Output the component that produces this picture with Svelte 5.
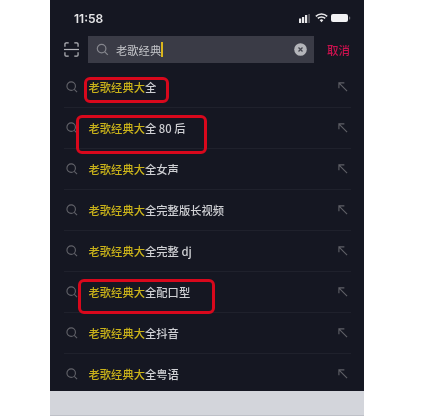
<script>
  const rows = [
    { rest: '全' },
    { rest: '全 80 后' },
    { rest: '全女声' },
    { rest: '全完整版长视频' },
    { rest: '全完整 dj' },
    { rest: '全配口型' },
    { rest: '全抖音' },
    { rest: '全粤语' }
  ];
  const marks = [
    { cls: 'm1' },
    { cls: 'm2' },
    { cls: 'm3' }
  ];
</script>

<div class="page">
  <div class="phone">
    <div class="status">
      <span class="time">11:58</span>
      <div class="status-icons">
        <svg class="signal" width="12" height="9" viewBox="0 0 12 9">
          <rect x="0" y="4.500" width="2.200" height="4.500" fill="#e8e8ea"/>
          <rect x="3" y="3" width="2.200" height="6" fill="#e8e8ea"/>
          <rect x="6" y="1" width="2.200" height="8" fill="#e8e8ea"/>
          <rect x="9.200" y="0" width="1.800" height="9" fill="#55565e"/>
        </svg>
        <svg width="13" height="10" viewBox="0 0 13 10">
          <path d="M.8 3.400a8.200 8.200 0 0 1 11.400 0M2.800 5.400a5.300 5.300 0 0 1 7.400 0" fill="none" stroke="#e8e8ea" stroke-width="1.500"/>
          <path d="M4.700 7.200a2.600 2.600 0 0 1 3.600 0L6.500 9.200z" fill="#e8e8ea"/>
        </svg>
        <svg class="battery" width="20" height="10" viewBox="0 0 20 10">
          <rect x="0" y="1" width="17" height="8" rx="2" fill="#f2f2f4"/>
          <rect x="18" y="3.500" width="1.200" height="3" rx=".6" fill="#6a6b72"/>
        </svg>
      </div>
    </div>

    <div class="searchbar">
      <svg class="scan" width="15" height="15" viewBox="0 0 16 16" fill="none" stroke="#b5b6bb" stroke-width="1.300">
        <path d="M1 5V2.200Q1 1 2.200 1H5M11 1h2.800Q15 1 15 2.200V5M1 11v2.800Q1 15 2.200 15H5M11 15h2.800Q15 15 15 13.800V11"/>
        <path d="M0 8h16"/>
      </svg>
      <div class="input">
        <svg width="13" height="13" viewBox="0 0 13 13" fill="none" stroke="#85868d" stroke-width="1.200">
          <circle cx="5.600" cy="5.600" r="4.300"/>
          <path d="M8.800 8.800l3 3"/>
        </svg>
        <span class="query">老歌经典</span><span class="caret"></span>
        <span class="clear">
          <svg width="13" height="13" viewBox="0 0 13 13">
            <circle cx="6.500" cy="6.500" r="6.300" fill="#b4b5ba"/>
            <path d="M4.500 4.500l4 4M8.500 4.500l-4 4" stroke="#44454f" stroke-width="1.300"/>
          </svg>
        </span>
      </div>
      <span class="cancel">取消</span>
    </div>

    <ul class="list">
      {#each rows as row}
        <li class="row">
          <svg class="glass" width="12" height="12" viewBox="0 0 13 13" fill="none" stroke="#62636a" stroke-width="1.200">
            <circle cx="5.600" cy="5.600" r="4.600"/>
            <path d="M9 9l3 3"/>
          </svg>
          <span class="label"><em>老歌经典大</em>{row.rest}</span>
          <svg class="arrow" width="10" height="10" viewBox="0 0 11 11" fill="none" stroke="#5f6067" stroke-width="1.200">
            <path d="M10 10L1.200 1.200M1 7V1h6"/>
          </svg>
        </li>
      {/each}
    </ul>

    {#each marks as m}
      <div class="mark {m.cls}"></div>
    {/each}

    <div class="footer"></div>
  </div>
</div>

<style>
  :global(body) {
    margin: 0;
    background: #fff;
  }
  .page {
    width: 423px;
    height: 417px;
    overflow: hidden;
    background: #fff;
  }
  .phone {
    position: relative;
    width: 314px;
    margin-left: 50px;
    background: #151722;
    color: #dedfe2;
    font-family: "Noto Sans CJK SC", "Liberation Sans", sans-serif;
    font-size: 11.300px;
    display: flex;
    flex-direction: column;
    filter: blur(0.35px);
  }
  .status {
    height: 36px;
    display: flex;
    align-items: center;
    justify-content: space-between;
    padding: 0 13px 0 24px;
    box-sizing: border-box;
    flex: none;
  }
  .time {
    font-family: "Inter", "Liberation Sans", sans-serif;
    font-size: 12px;
    font-weight: 600;
    color: #e6e6e8;
  }
  .status-icons {
    display: flex;
    align-items: center;
    gap: 4px;
  }
  .battery {
    margin-left: -1px;
  }
  .searchbar {
    height: 27px;
    display: flex;
    align-items: center;
    flex: none;
    padding-left: 14px;
  }
  .scan { flex: none; }
  .input {
    width: 226px;
    height: 27px;
    margin-left: 9px;
    background: #3a3b46;
    display: flex;
    align-items: center;
    padding: 0 7px 0 8px;
    box-sizing: border-box;
    flex: none;
  }
  .query {
    margin-left: 7px;
    color: #c4c5c9;
    line-height: 16px;
  }
  .caret {
    width: 1.500px;
    height: 15px;
    background: #d9b51c;
  }
  .clear {
    margin-left: auto;
    display: flex;
  }
  .cancel {
    margin-left: 13px;
    color: #c8124e;
    font-weight: 500;
    font-size: 11.500px;
  }
  .list {
    list-style: none;
    margin: 4.500px 0 0;
    padding: 0;
    flex: none;
    height: 323.500px;
    overflow: hidden;
  }
  .row {
    height: 40.900px;
    margin: 0 13px 0 14px;
    box-sizing: border-box;
    display: flex;
    align-items: center;
    border-bottom: 1px solid #1f212c;
    padding: 0 3px 0 2px;
  }
  .row:last-child {
    border-bottom: none;
  }
  .glass { flex: none; }
  .label {
    margin-left: 10.500px;
    color: #cfd0d4;
    font-weight: 500;
    line-height: 16px;
    white-space: nowrap;
  }
  .label em {
    font-style: normal;
    color: #c9b21a;
  }
  .arrow {
    margin-left: auto;
    flex: none;
  }
  .footer {
    flex: none;
    height: 24px;
    background: #d3d5db;
    border-bottom: 1px solid #bfc1c8;
  }
  .mark {
    position: absolute;
    border: 3px solid #d8081c;
    border-radius: 6px;
    box-sizing: border-box;
  }
  .m1 { left: 34px; top: 77px; width: 85px; height: 26px; }
  .m2 { left: 26px; top: 115px; width: 131px; height: 39px; }
  .m3 { left: 28px; top: 279px; width: 137px; height: 35px; }
</style>
